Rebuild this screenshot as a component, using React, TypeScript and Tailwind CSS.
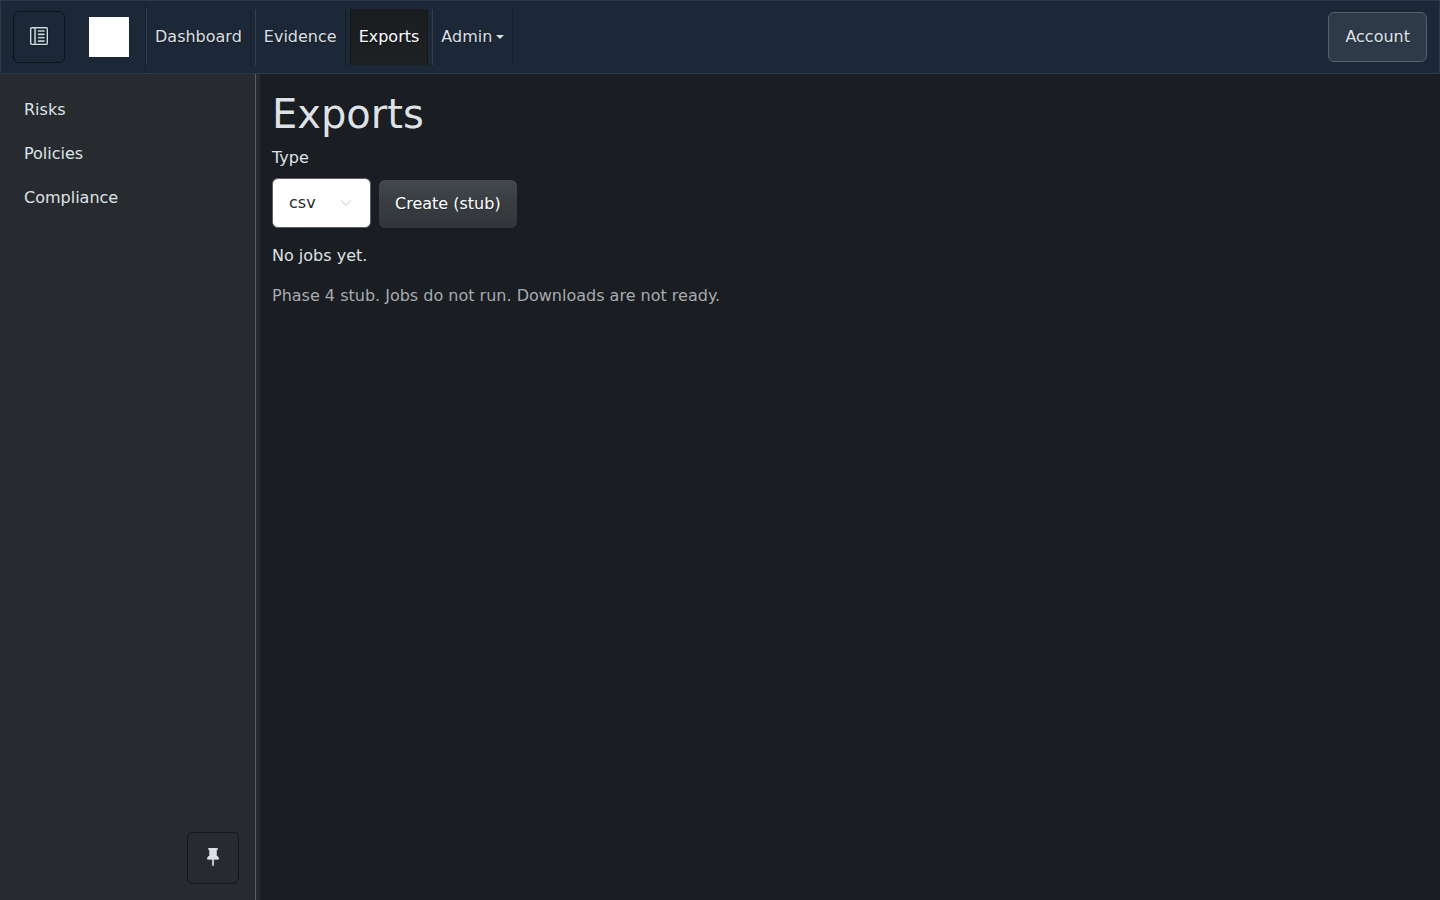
import React from "react";
import { BsLayoutTextSidebarReverse, BsPinFill } from "react-icons/bs";

const shadow = "[text-shadow:1px_1px_1px_rgba(0,0,0,0.3)]";
const navItem = "flex h-14 items-center border-r border-r-[#15202c] border-l border-l-[#34404d] px-2 text-[#dcdee0]";

export default function App() {
  return (
    <div className="flex h-[900px] w-full flex-col overflow-hidden bg-[#1a1d21] font-['DejaVu_Sans',sans-serif] text-base leading-6 text-[#dee2e6]">
      <header className={`flex h-[74px] shrink-0 items-center border border-[#2c3947] bg-[#1c2837] px-3 ${shadow}`}>
        <button className="flex h-[52px] w-[52px] items-center justify-center rounded-md border border-[#0e131a] pb-0.5">
          <BsLayoutTextSidebarReverse className="size-[18px] stroke-current text-[#d3e0e3] [filter:drop-shadow(1px_1px_1px_rgba(0,0,0,0.3))] [stroke-width:0.35]" />
        </button>
        <div className="flex h-full items-center border-r border-[#15202c] pr-4 pl-6">
          <div className="size-10 bg-white" />
        </div>
        <nav className="flex gap-1">
          <a className={navItem}>Dashboard</a>
          <a className={navItem}>Evidence</a>
          <a className="flex h-14 items-center border-x border-[#14171a] bg-linear-to-b from-[#1a1d1f] to-[#1e2024] px-2 text-white">Exports</a>
          <a className={navItem}>
            Admin
            <span className="ml-1 border-x-4 border-t-4 border-x-transparent border-t-current" />
          </a>
        </nav>
        <button className={`ml-auto h-[50px] rounded-md border border-[#555f69] bg-[#2f3a48] px-4 ${shadow}`}>Account</button>
      </header>
      <div className="flex min-h-0 flex-1">
        <aside className="flex w-64 flex-col justify-between border-r border-[#5b5d60] bg-[#272b30] p-4">
          <nav className="flex flex-col">
            <a className="px-2 py-2">Risks</a>
            <a className="mt-1 px-2 py-2">Policies</a>
            <a className="mt-1 px-2 py-2">Compliance</a>
          </nav>
          <button className="flex h-[52px] w-[52px] items-center justify-center self-end rounded-md border border-[#141618] pb-0.5">
            <BsPinFill className="size-[18px] stroke-current [stroke-width:0.6]" />
          </button>
        </aside>
        <div className="w-1 bg-[#272b30]" />
        <main className="flex-1 px-3 pt-4">
          <h1 className="mb-2 text-[40px] leading-[48px] [text-shadow:-1px_-1px_0_rgba(0,0,0,0.3)]">Exports</h1>
          <label className="mb-2 block">Type</label>
          <div className="flex items-end gap-2">
            <div className="flex h-[50px] w-[99px] items-center justify-between rounded-md border border-[#5c5e62] bg-white pr-[18px] pl-4 text-[#272b30]">
              csv
              <svg viewBox="0 0 16 16" className="size-3 fill-none stroke-[#dee2e6] stroke-2" strokeLinecap="round" strokeLinejoin="round">
                <path d="m2 5 6 6 6-6" />
              </svg>
            </div>
            <button className={`h-12 rounded-md bg-linear-to-b from-[#44494d] via-[#3a3f43] via-40% to-[#313539] px-4 text-white ${shadow}`}>Create (stub)</button>
          </div>
          <p className="mt-4">No jobs yet.</p>
          <p className="mt-4 text-[#a7abae]">Phase 4 stub. Jobs do not run. Downloads are not ready.</p>
        </main>
      </div>
    </div>
  );
}
